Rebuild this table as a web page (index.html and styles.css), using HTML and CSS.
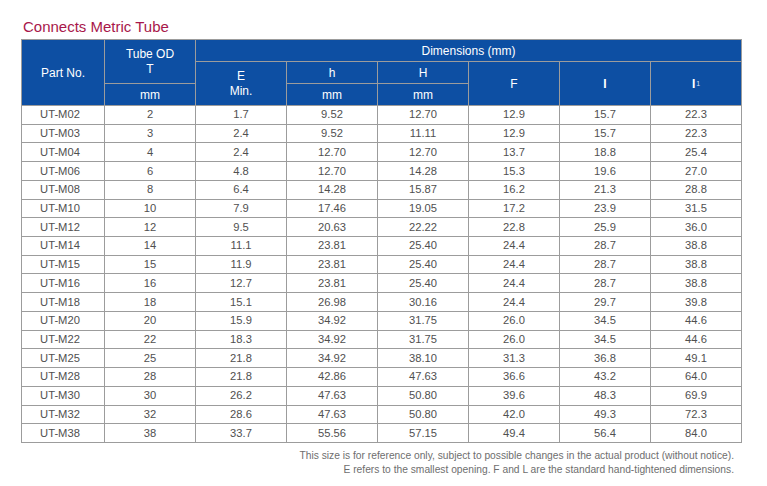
FILE: index.html
```html
<!DOCTYPE html>
<html lang="en">
<head>
<meta charset="utf-8">
<title>Connects Metric Tube</title>
<link rel="stylesheet" href="styles.css">
</head>
<body>
<div class="sheet">
  <h1 class="title">Connects Metric Tube</h1>
  <div class="spec">
    <div class="hc h-part">Part No.</div>
    <div class="hc h-tube two">Tube OD<br>T</div>
    <div class="hc h-tube-mm">mm</div>
    <div class="hc h-dim">Dimensions (mm)</div>
    <div class="hc h-e two">E<br>Min.</div>
    <div class="hc h-h">h</div>
    <div class="hc h-h-mm">mm</div>
    <div class="hc h-H">H</div>
    <div class="hc h-H-mm">mm</div>
    <div class="hc h-f">F</div>
    <div class="hc h-l"><b>I</b></div>
    <div class="hc h-l1"><b>I</b><sub class="sub">1</sub></div>

    <div class="dc pn">UT-M02</div><div class="dc">2</div><div class="dc">1.7</div><div class="dc">9.52</div><div class="dc">12.70</div><div class="dc">12.9</div><div class="dc">15.7</div><div class="dc">22.3</div>
    <div class="dc pn">UT-M03</div><div class="dc">3</div><div class="dc">2.4</div><div class="dc">9.52</div><div class="dc">11.11</div><div class="dc">12.9</div><div class="dc">15.7</div><div class="dc">22.3</div>
    <div class="dc pn">UT-M04</div><div class="dc">4</div><div class="dc">2.4</div><div class="dc">12.70</div><div class="dc">12.70</div><div class="dc">13.7</div><div class="dc">18.8</div><div class="dc">25.4</div>
    <div class="dc pn">UT-M06</div><div class="dc">6</div><div class="dc">4.8</div><div class="dc">12.70</div><div class="dc">14.28</div><div class="dc">15.3</div><div class="dc">19.6</div><div class="dc">27.0</div>
    <div class="dc pn">UT-M08</div><div class="dc">8</div><div class="dc">6.4</div><div class="dc">14.28</div><div class="dc">15.87</div><div class="dc">16.2</div><div class="dc">21.3</div><div class="dc">28.8</div>
    <div class="dc pn">UT-M10</div><div class="dc">10</div><div class="dc">7.9</div><div class="dc">17.46</div><div class="dc">19.05</div><div class="dc">17.2</div><div class="dc">23.9</div><div class="dc">31.5</div>
    <div class="dc pn">UT-M12</div><div class="dc">12</div><div class="dc">9.5</div><div class="dc">20.63</div><div class="dc">22.22</div><div class="dc">22.8</div><div class="dc">25.9</div><div class="dc">36.0</div>
    <div class="dc pn">UT-M14</div><div class="dc">14</div><div class="dc">11.1</div><div class="dc">23.81</div><div class="dc">25.40</div><div class="dc">24.4</div><div class="dc">28.7</div><div class="dc">38.8</div>
    <div class="dc pn">UT-M15</div><div class="dc">15</div><div class="dc">11.9</div><div class="dc">23.81</div><div class="dc">25.40</div><div class="dc">24.4</div><div class="dc">28.7</div><div class="dc">38.8</div>
    <div class="dc pn">UT-M16</div><div class="dc">16</div><div class="dc">12.7</div><div class="dc">23.81</div><div class="dc">25.40</div><div class="dc">24.4</div><div class="dc">28.7</div><div class="dc">38.8</div>
    <div class="dc pn">UT-M18</div><div class="dc">18</div><div class="dc">15.1</div><div class="dc">26.98</div><div class="dc">30.16</div><div class="dc">24.4</div><div class="dc">29.7</div><div class="dc">39.8</div>
    <div class="dc pn">UT-M20</div><div class="dc">20</div><div class="dc">15.9</div><div class="dc">34.92</div><div class="dc">31.75</div><div class="dc">26.0</div><div class="dc">34.5</div><div class="dc">44.6</div>
    <div class="dc pn">UT-M22</div><div class="dc">22</div><div class="dc">18.3</div><div class="dc">34.92</div><div class="dc">31.75</div><div class="dc">26.0</div><div class="dc">34.5</div><div class="dc">44.6</div>
    <div class="dc pn">UT-M25</div><div class="dc">25</div><div class="dc">21.8</div><div class="dc">34.92</div><div class="dc">38.10</div><div class="dc">31.3</div><div class="dc">36.8</div><div class="dc">49.1</div>
    <div class="dc pn">UT-M28</div><div class="dc">28</div><div class="dc">21.8</div><div class="dc">42.86</div><div class="dc">47.63</div><div class="dc">36.6</div><div class="dc">43.2</div><div class="dc">64.0</div>
    <div class="dc pn">UT-M30</div><div class="dc">30</div><div class="dc">26.2</div><div class="dc">47.63</div><div class="dc">50.80</div><div class="dc">39.6</div><div class="dc">48.3</div><div class="dc">69.9</div>
    <div class="dc pn">UT-M32</div><div class="dc">32</div><div class="dc">28.6</div><div class="dc">47.63</div><div class="dc">50.80</div><div class="dc">42.0</div><div class="dc">49.3</div><div class="dc">72.3</div>
    <div class="dc pn">UT-M38</div><div class="dc">38</div><div class="dc">33.7</div><div class="dc">55.56</div><div class="dc">57.15</div><div class="dc">49.4</div><div class="dc">56.4</div><div class="dc">84.0</div>
  </div>
  <p class="note">This size is for reference only, subject to possible changes in the actual product (without notice).<br>E refers to the smallest opening. F and L are the standard hand-tightened dimensions.</p>
</div>
</body>
</html>
```

FILE: styles.css
```css
html, body {
  margin: 0;
  padding: 0;
  background: #ffffff;
}

body {
  font-family: "Liberation Sans", Arial, sans-serif;
}

.sheet {
  width: 721px;
  margin-left: 21px;
  padding-top: 18px;
}

.title {
  margin: 0 0 3px 2px;
  font-size: 15px;
  line-height: 18px;
  font-weight: normal;
  color: #a8174a;
}

.spec {
  display: grid;
  grid-template-columns: 82px repeat(7, 90px);
  grid-template-rows: 21px 21px 21px repeat(18, 17.72px);
  gap: 1px;
  background: #9c9c9c;
  border: 1px solid #9c9c9c;
  width: max-content;
}

.hc {
  background: #0d4fa3;
  color: #ffffff;
  font-size: 12px;
  line-height: 15px;
  display: flex;
  align-items: center;
  justify-content: center;
  text-align: center;
  padding-top: 1px;
}

.two {
  line-height: 15px;
}

.h-part { grid-column: 1; grid-row: 1 / 4; }
.h-tube { grid-column: 2; grid-row: 1 / 3; }
.h-tube-mm { grid-column: 2; grid-row: 3; }
.h-dim { grid-column: 3 / 9; grid-row: 1; }
.h-e { grid-column: 3; grid-row: 2 / 4; }
.h-h { grid-column: 4; grid-row: 2; }
.h-h-mm { grid-column: 4; grid-row: 3; }
.h-H { grid-column: 5; grid-row: 2; }
.h-H-mm { grid-column: 5; grid-row: 3; }
.h-f { grid-column: 6; grid-row: 2 / 4; }
.h-l { grid-column: 7; grid-row: 2 / 4; }
.h-l1 { grid-column: 8; grid-row: 2 / 4; }

.sub {
  font-size: 7px;
  vertical-align: -3px;
  line-height: 0;
  color: #cfe0ff;
  margin-left: 1px;
}

.dc {
  background: #ffffff;
  color: #505050;
  font-size: 11.2px;
  line-height: 13px;
  display: flex;
  align-items: center;
  justify-content: center;
}

.pn {
  padding-right: 6px;
}

.note {
  margin: 6px 8px 0 0;
  font-size: 10.25px;
  line-height: 14px;
  color: #6e6e6e;
  text-align: right;
}
```
